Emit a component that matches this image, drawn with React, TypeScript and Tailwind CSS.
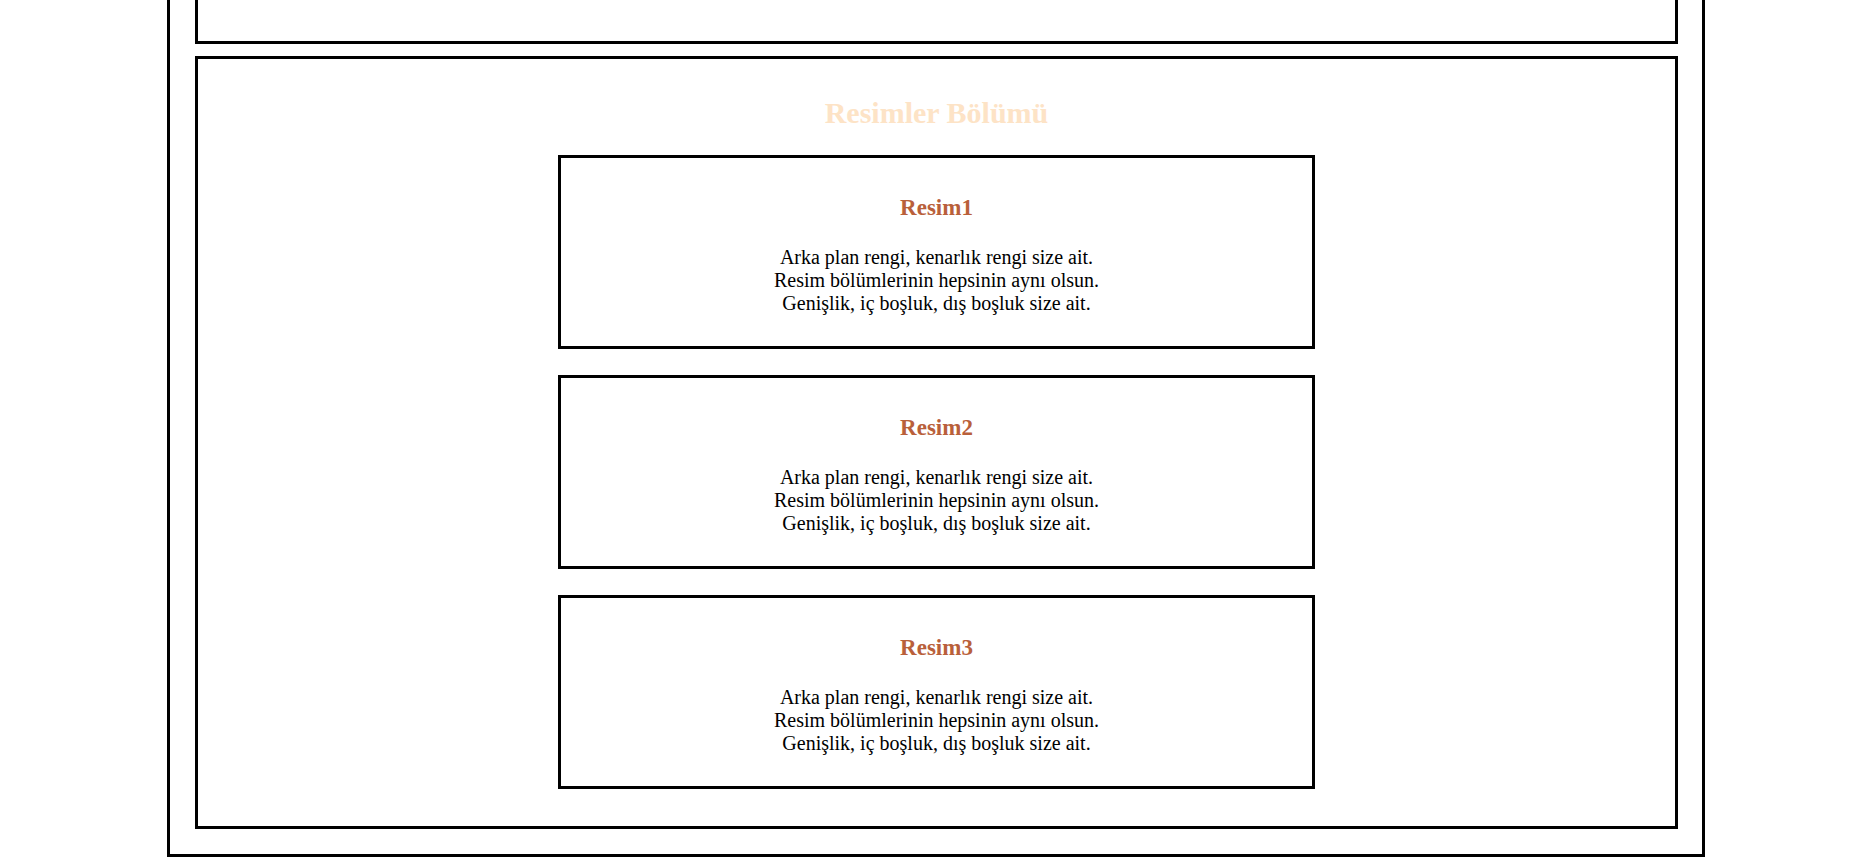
import React from "react";

const cards = ["Resim1", "Resim2", "Resim3"];

const ResimKart: React.FC<{ title: string }> = ({ title }) => (
  <div className="w-[757px] mx-auto border-[3px] border-black bg-white pt-[37px] pb-[31px] text-center">
    <h3 className="text-[23px] leading-[26px] font-bold text-[#b9603a]">{title}</h3>
    <p className="mt-[25px] text-[20px] leading-[23px] text-black">
      Arka plan rengi, kenarlık rengi size ait.
      <br />
      Resim bölümlerinin hepsinin aynı olsun.
      <br />
      Genişlik, iç boşluk, dış boşluk size ait.
    </p>
  </div>
);

export default function App() {
  return (
    <div className="h-[860px] overflow-hidden bg-white font-['Liberation_Serif','Times_New_Roman',serif]">
      <div className="ml-[167px] w-[1538px] border-[3px] border-t-0 border-black pl-[25px] pr-[24px] pb-[25px]">
        {/* önceki bölüm, üstü kaydırılmış */}
        <div className="h-[44px] border-[3px] border-t-0 border-black" />

        <section className="mt-[12px] border-[3px] border-black pt-[37px] pb-[37px]">
          <h2 className="text-center text-[30px] leading-[34px] font-bold text-[#fde3c6]">
            Resimler Bölümü
          </h2>
          <div className="mt-[25px] flex flex-col gap-[26px]">
            {cards.map((c) => (
              <ResimKart key={c} title={c} />
            ))}
          </div>
        </section>
      </div>
    </div>
  );
}
